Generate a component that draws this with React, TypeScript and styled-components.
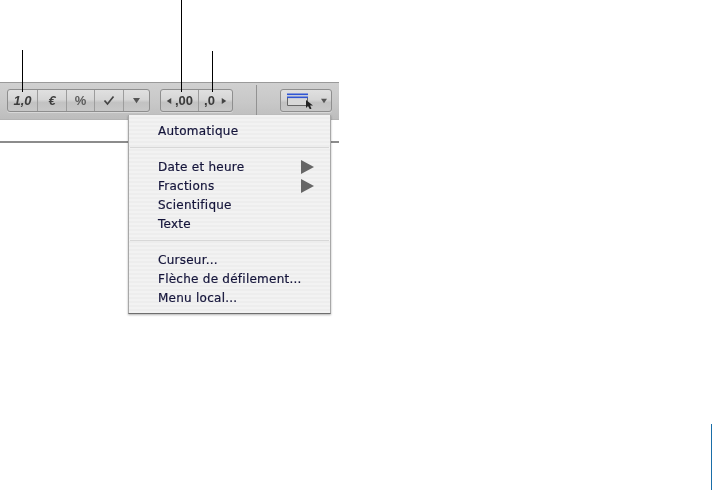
import React from "react";
import styled, { createGlobalStyle } from "styled-components";

const GlobalStyle = createGlobalStyle`
  html, body { margin: 0; padding: 0; background: #fff; }
  body { font-family: "DejaVu Sans", "Liberation Sans", sans-serif; }
`;

const Page = styled.div`
  position: relative;
  width: 712px;
  height: 490px;
  padding-top: 82px;
  box-sizing: border-box;
  overflow: hidden;
  background: #fff;
`;

const Toolbar = styled.div`
  width: 339px;
  height: 38px;
  box-sizing: border-box;
  display: flex;
  align-items: center;
  padding: 0 0 1px 7px;
  border-top: 1px solid #9a9a9a;
  border-bottom: 1px solid #b4b4b4;
  background: linear-gradient(#d0d0d0, #c8c8c8 55%, #bdbdbd);
`;

const ButtonGroup = styled.div<{ $gap: number }>`
  display: flex;
  height: 21px;
  margin-right: ${(p) => p.$gap}px;
  border: 1px solid #8e8e8e;
  border-radius: 3px;
  overflow: hidden;
  background: linear-gradient(#e0e0e0, #d6d6d6 45%, #c2c2c2 60%, #c8c8c8);
  box-shadow: 0 1px 0 #d8d8d8;
`;

const Cell = styled.div<{ $w: number; $gap?: number }>`
  width: ${(p) => p.$w}px;
  box-sizing: border-box;
  display: flex;
  align-items: center;
  justify-content: center;
  gap: ${(p) => p.$gap ?? 2}px;
  border-left: 1px solid #9c9c9c;
  font-size: 11px;
  font-weight: bold;
  color: #3c3c3c;
  filter: blur(0.35px);
  &:first-child { border-left: none; }
`;

const ItalicLabel = styled.span`
  font-family: "Liberation Sans", sans-serif;
  font-style: italic;
  font-size: 13px;
`;

const PercentLabel = styled.span`
  font-family: "Liberation Sans", sans-serif;
  font-size: 13px;
  color: #5c5c5c;
`;

const NumberLabel = styled.span`
  font-family: "Liberation Sans", sans-serif;
  font-size: 13px;
  font-weight: bold;
  color: #3a3a3a;
`;

const Separator = styled.div`
  width: 1px;
  height: 31px;
  margin-right: 23px;
  background: #929292;
`;

const Sheet = styled.div`
  width: 339px;
  height: 23px;
  box-sizing: border-box;
  background: #fff;
  border-bottom: 2px solid #8c8c8c;
`;

const Menu = styled.div`
  position: absolute;
  left: 128px;
  top: 115px;
  width: 203px;
  height: 199px;
  box-sizing: border-box;
  padding: 6px 0 0;
  background: repeating-linear-gradient(#f2f2f2 0, #f2f2f2 2px, #ededed 2px, #ededed 4px);
  border-left: 1px solid #a8a8a8;
  border-right: 1px solid #a8a8a8;
  border-bottom: 1px solid #6e6e6e;
  box-shadow: 0 1px 2px rgba(0, 0, 0, 0.3);
`;

const MenuItem = styled.div`
  height: 19px;
  display: flex;
  align-items: center;
  justify-content: space-between;
  padding: 0 16px 0 29px;
  font-size: 12px;
  letter-spacing: 0.25px;
  color: #14143a;
  -webkit-text-stroke: 0.2px #14143a;
  filter: blur(0.35px);
`;

const MenuRule = styled.div<{ $before: number; $after: number }>`
  height: 1px;
  margin: ${(p) => p.$before}px 1px ${(p) => p.$after}px;
  background: #d8d8d8;
`;

const Callout = styled.div<{ $x: number; $from: number; $to: number }>`
  position: absolute;
  left: ${(p) => p.$x}px;
  top: ${(p) => p.$from}px;
  width: 1px;
  height: ${(p) => p.$to - p.$from}px;
  background: #000;
`;

const EdgeMark = styled.div`
  position: absolute;
  right: 0;
  top: 424px;
  bottom: 0;
  width: 1px;
  background: #1a6ea8;
`;

const Caret = ({ dir = "down", size = 7, color = "#555" }: { dir?: "down" | "left" | "right"; size?: number; color?: string }) => {
  const points = dir === "down" ? "0,1 8,1 4,7" : dir === "left" ? "7,0 7,8 1,4" : "1,0 1,8 7,4";
  return (
    <svg width={size} height={size} viewBox="0 0 8 8">
      <polygon points={points} fill={color} />
    </svg>
  );
};

const CheckIcon = () => (
  <svg width="12" height="11" viewBox="0 0 12 11">
    <path d="M1.5 5.5 L4.5 9 L10.5 1.5" fill="none" stroke="#444" strokeWidth="1.7" />
  </svg>
);

const BordersIcon = () => (
  <svg width="33" height="17" viewBox="0 0 33 17">
    <path d="M1.5 6 V13.5 H21.5 V6" fill="#d8d8d8" stroke="#666" />
    <rect x="1" y="1.5" width="21" height="1.6" fill="#2f55d4" />
    <rect x="1" y="4.5" width="21" height="1.6" fill="#2f55d4" />
    <path d="M20 8 L20 16 L22 14 L24 17.5 L25.5 16.5 L24 13.5 L27 13.5 Z" fill="#222" />
  </svg>
);

const SubmenuArrow = () => (
  <svg width="13" height="14" viewBox="0 0 13 14">
    <polygon points="0,0 13,7 0,14" fill="#666" />
  </svg>
);

export default function App() {
  return (
    <>
      <GlobalStyle />
      <Page>
        <Toolbar>
          <ButtonGroup $gap={10}>
            <Cell $w={29}><ItalicLabel>1,0</ItalicLabel></Cell>
            <Cell $w={29}><ItalicLabel>€</ItalicLabel></Cell>
            <Cell $w={28}><PercentLabel>%</PercentLabel></Cell>
            <Cell $w={29}><CheckIcon /></Cell>
            <Cell $w={26}><Caret /></Cell>
          </ButtonGroup>
          <ButtonGroup $gap={23}>
            <Cell $w={37} $gap={3}><Caret dir="left" size={6} color="#444" /><NumberLabel>,00</NumberLabel></Cell>
            <Cell $w={34} $gap={6}><NumberLabel>,0</NumberLabel><Caret dir="right" size={6} color="#444" /></Cell>
          </ButtonGroup>
          <Separator />
          <ButtonGroup $gap={0}>
            <Cell $w={50}><BordersIcon /><Caret size={6} /></Cell>
          </ButtonGroup>
        </Toolbar>
        <Sheet />
        <Menu>
          <MenuItem>Automatique</MenuItem>
          <MenuRule $before={7} $after={9} />
          <MenuItem>Date et heure<SubmenuArrow /></MenuItem>
          <MenuItem>Fractions<SubmenuArrow /></MenuItem>
          <MenuItem>Scientifique</MenuItem>
          <MenuItem>Texte</MenuItem>
          <MenuRule $before={7} $after={9} />
          <MenuItem>Curseur...</MenuItem>
          <MenuItem>Flèche de défilement...</MenuItem>
          <MenuItem>Menu local...</MenuItem>
        </Menu>
        <Callout $x={22} $from={50} $to={92} />
        <Callout $x={181} $from={0} $to={92} />
        <Callout $x={212} $from={51} $to={92} />
        <EdgeMark />
      </Page>
    </>
  );
}
